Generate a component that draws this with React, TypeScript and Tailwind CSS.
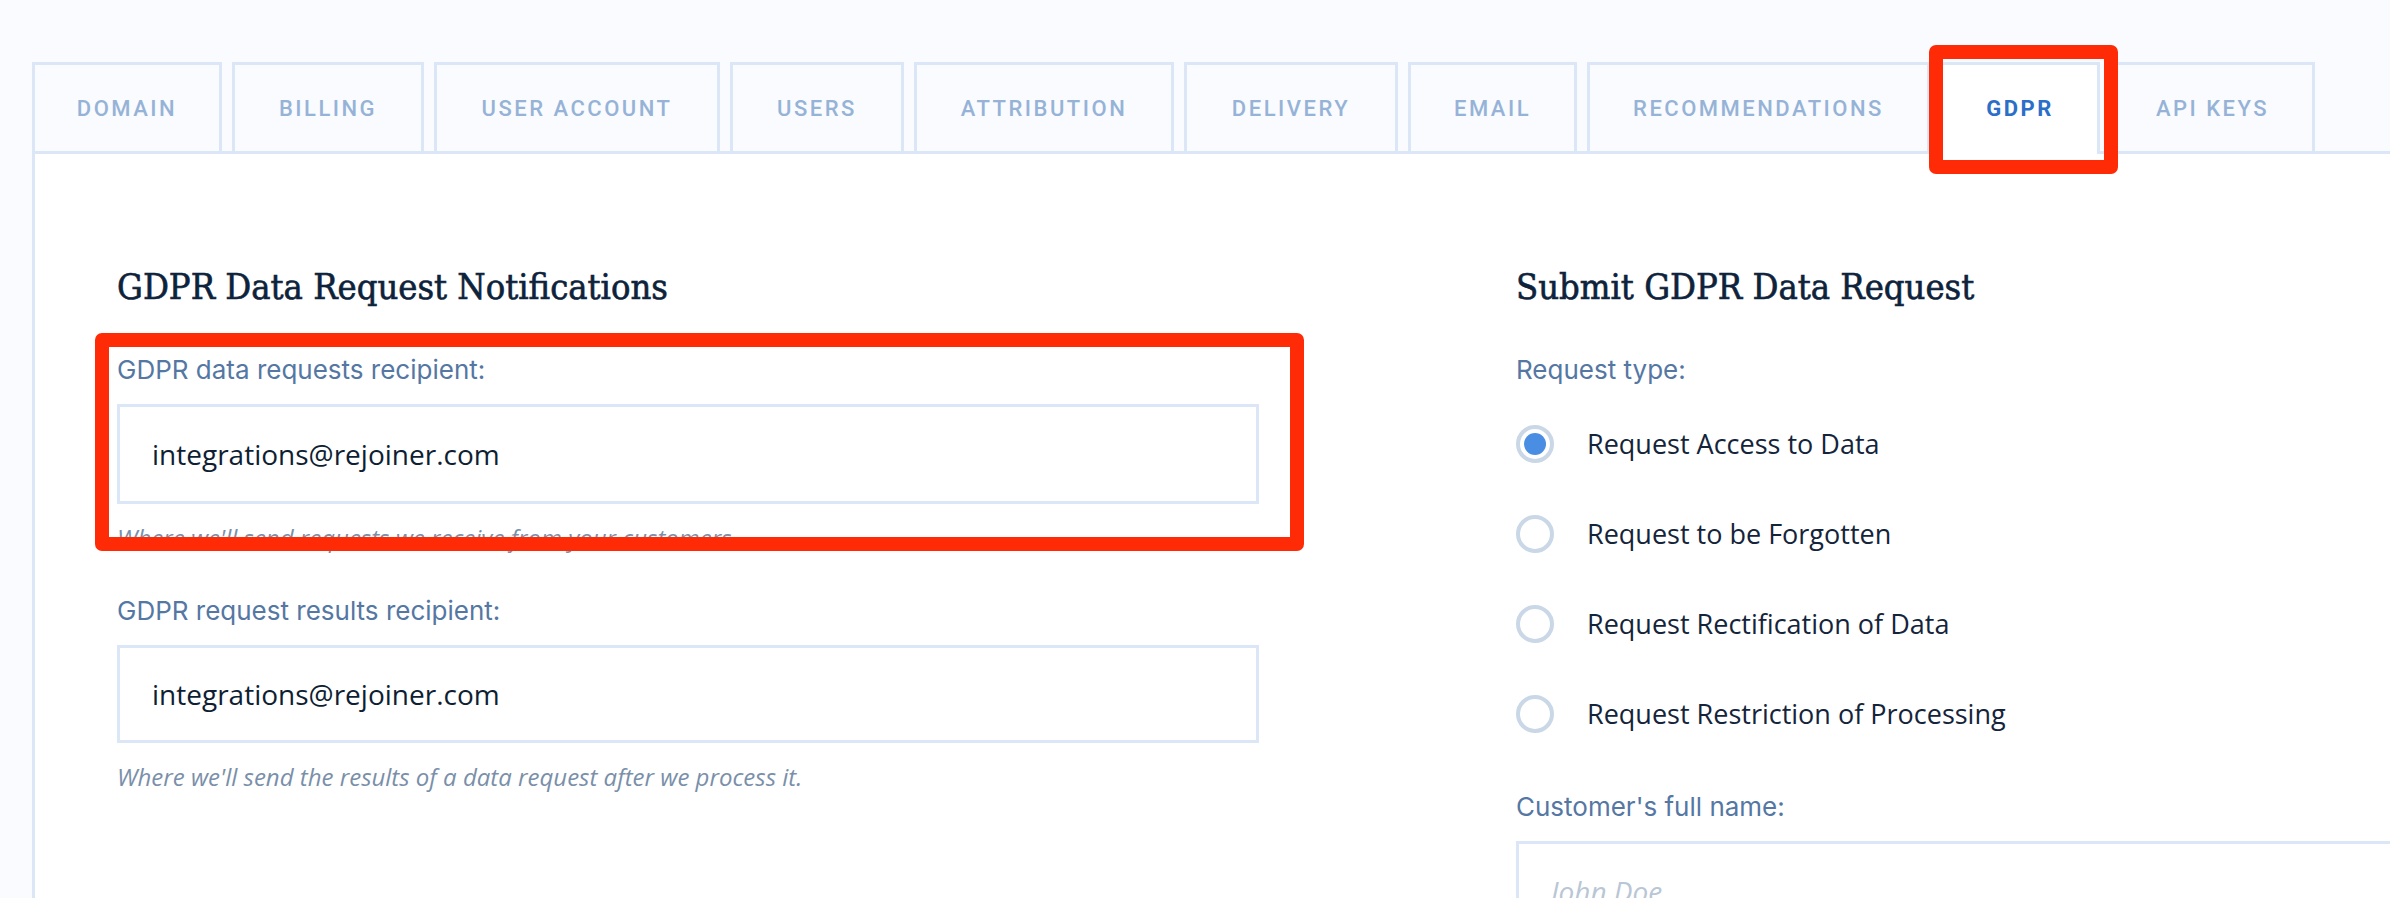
import React from "react";

const tabs: { label: string; w: string; active?: boolean }[] = [
  { label: "DOMAIN", w: "w-[190px]" },
  { label: "BILLING", w: "w-[192px]" },
  { label: "USER ACCOUNT", w: "w-[286px]" },
  { label: "USERS", w: "w-[174px]" },
  { label: "ATTRIBUTION", w: "w-[260px]" },
  { label: "DELIVERY", w: "w-[214px]" },
  { label: "EMAIL", w: "w-[169px]" },
  { label: "RECOMMENDATIONS", w: "w-[343px]" },
  { label: "GDPR", w: "w-[160px]", active: true },
  { label: "API KEYS", w: "w-[205px]" },
];

const radios = [
  { label: "Request Access to Data", checked: true },
  { label: "Request to be Forgotten" },
  { label: "Request Rectification of Data" },
  { label: "Request Restriction of Processing" },
];

const headingCls =
  "font-['DejaVu_Serif_Condensed','DejaVu_Serif',serif] text-[36px] leading-[44px] text-[#0d223b] [-webkit-text-stroke:0.6px_#0d223b]";
const labelCls =
  "font-['Inter','Noto_Sans',sans-serif] text-[26px] leading-[34px] text-[#5577a3]";
const inputCls =
  "mt-[17px] flex items-center border-[3px] border-[#dbe7f6] bg-white pl-[32px] font-['Open_Sans',sans-serif] text-[28px] text-[#0e1e33]";
const helperCls =
  "mt-[19px] font-['Open_Sans',sans-serif] italic text-[24px] leading-[30px] text-[#7a8fa9]";

export default function App() {
  return (
    <div className="w-[2390px] h-[898px] overflow-hidden bg-[#f9fbfe] flex flex-col">
      {/* Tabs */}
      <div className="flex items-end gap-[10px] pl-[32px] pt-[62px]">
        {tabs.map((t) => (
          <div
            key={t.label}
            className={
              t.active
                ? `${t.w} relative z-10 -mb-[3px] h-[92px] border-[3px] border-b-0 border-[#dbe7f6] bg-white pb-[3px] flex items-center justify-center font-['Roboto',sans-serif] font-bold text-[22px] tracking-[2.5px] text-[#2b6fc8]`
                : `${t.w} h-[89px] border-[3px] border-b-0 border-[#dbe7f6] bg-[#f9fbfe] flex items-center justify-center font-['Roboto',sans-serif] font-medium text-[22px] tracking-[2.5px] text-[#96b3d7]`
            }
          >
            {t.label}
            {t.active && (
              <div className="pointer-events-none absolute -left-[14px] -right-[21px] -top-[20px] -bottom-[20px] rounded-[7px] border-[14px] border-[#ff2b06]" />
            )}
          </div>
        ))}
      </div>

      {/* Panel */}
      <div className="ml-[32px] flex-1 border-l-[3px] border-t-[3px] border-[#dbe7f6] bg-white pl-[82px] pt-[111px]">
        <div className="grid grid-cols-[1142px_1142px] gap-x-[257px]">
          {/* Left column */}
          <div className="flex flex-col">
            <h2 className={headingCls}>GDPR Data Request Notifications</h2>

            <div className="relative mt-[44px] flex flex-col">
              <div className={labelCls}>GDPR data requests recipient:</div>
              <div className={`${inputCls} h-[100px]`}>integrations@rejoiner.com</div>
              <div className={helperCls}>Where we'll send requests we receive from your customers.</div>
              <div className="pointer-events-none absolute -left-[22px] -right-[45px] -top-[20px] bottom-[2px] z-10 rounded-[7px] border-[14px] border-[#ff2b06]" />
            </div>

            <div className={`${labelCls} mt-[41px]`}>GDPR request results recipient:</div>
            <div className={`${inputCls} h-[98px]`}>integrations@rejoiner.com</div>
            <div className={helperCls}>Where we'll send the results of a data request after we process it.</div>
          </div>

          {/* Right column */}
          <div className="flex flex-col">
            <h2 className={headingCls}>Submit GDPR Data Request</h2>
            <div className={`${labelCls} mt-[44px]`}>Request type:</div>
            <div className="mt-[12px] flex flex-col">
              {radios.map((r) => (
                <div key={r.label} className="flex h-[90px] items-center">
                  <div className="flex h-[38px] w-[38px] items-center justify-center rounded-full border-[4px] border-[#c9d7e6] bg-white">
                    {r.checked && <div className="h-[22px] w-[22px] rounded-full bg-[#4a8ee3]" />}
                  </div>
                  <span className="ml-[33px] font-['Open_Sans',sans-serif] text-[27px] text-[#14243a]">
                    {r.label}
                  </span>
                </div>
              ))}
            </div>
            <div className={`${labelCls} mt-[31px]`}>Customer's full name:</div>
            <div className={`${inputCls} h-[100px] italic text-[#b9c6d6]`}>John Doe</div>
          </div>
        </div>
      </div>
    </div>
  );
}
